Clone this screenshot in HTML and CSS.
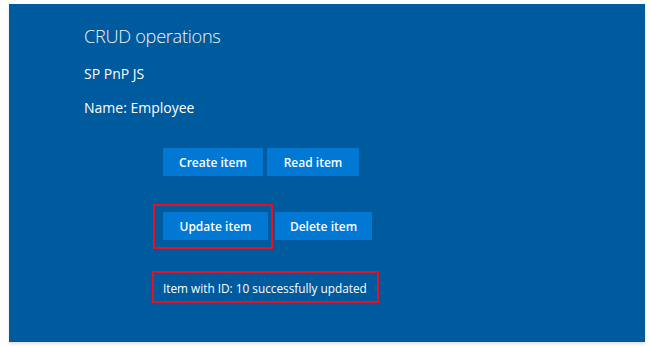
FILE: index.html
```html
<!DOCTYPE html>
<html>
<head>
<meta charset="utf-8">
<link rel="stylesheet" href="styles.css">
</head>
<body>
<div class="panel">
  <div class="content">
    <div class="title">CRUD operations</div>
    <div class="sub">SP PnP JS</div>
    <div class="sub name">Name: Employee</div>
    <div class="actions">
      <div class="row row1">
        <button class="btn w-create">Create item</button>
        <button class="btn w-read">Read item</button>
      </div>
      <div class="row row2">
        <button class="btn w-update">Update item</button>
        <button class="btn w-delete">Delete item</button>
      </div>
      <div class="status">Item with ID: 10 successfully updated</div>
    </div>
  </div>
  <div class="mark mark-update"></div>
  <div class="mark mark-status"></div>
</div>
</body>
</html>
```
FILE: styles.css
```css
html, body {
  margin: 0;
  padding: 0;
  background: #ffffff;
}
body {
  font-family: "Open Sans", "Noto Sans", sans-serif;
  width: 650px;
  height: 347px;
  overflow: hidden;
}
.panel {
  position: relative;
  margin: 4px 0 0 9px;
  width: 636px;
  height: 338px;
  background: #005a9e;
  box-shadow: 0 2px 3px rgba(0, 0, 0, 0.12);
  box-sizing: border-box;
  color: #ffffff;
}
.content {
  padding: 18px 0 0 75px;
}
.title {
  font-family: "Open Sans", sans-serif;
  font-size: 18.2px;
  font-weight: 300;
  letter-spacing: -0.3px;
  line-height: 28px;
  color: #eef4fa;
}
.sub {
  font-size: 14px;
  line-height: 20px;
  margin-top: 14px;
}
.name {
  margin-top: 14px;
}
.actions {
  margin-left: 79px;
  margin-top: 30px;
}
.row {
  display: flex;
  gap: 4px;
}
.row2 {
  margin-top: 36px;
  gap: 7px;
}
.btn {
  height: 28px;
  border: none;
  background: #0078d4;
  color: #ffffff;
  font-family: "Open Sans", "Noto Sans", sans-serif;
  font-size: 12px;
  font-weight: 600;
  padding: 0;
  display: flex;
  align-items: center;
  justify-content: center;
}
.w-create { width: 100px; }
.w-read { width: 92px; }
.w-update { width: 105px; }
.w-delete { width: 97px; }
.status {
  margin-top: 39px;
  font-size: 11.8px;
  line-height: 18px;
}
.mark {
  position: absolute;
  border: 2px solid #e81123;
  box-sizing: border-box;
}
.mark-update {
  left: 144px;
  top: 200px;
  width: 120px;
  height: 45px;
}
.mark-status {
  left: 143px;
  top: 267px;
  width: 227px;
  height: 32px;
}
```
